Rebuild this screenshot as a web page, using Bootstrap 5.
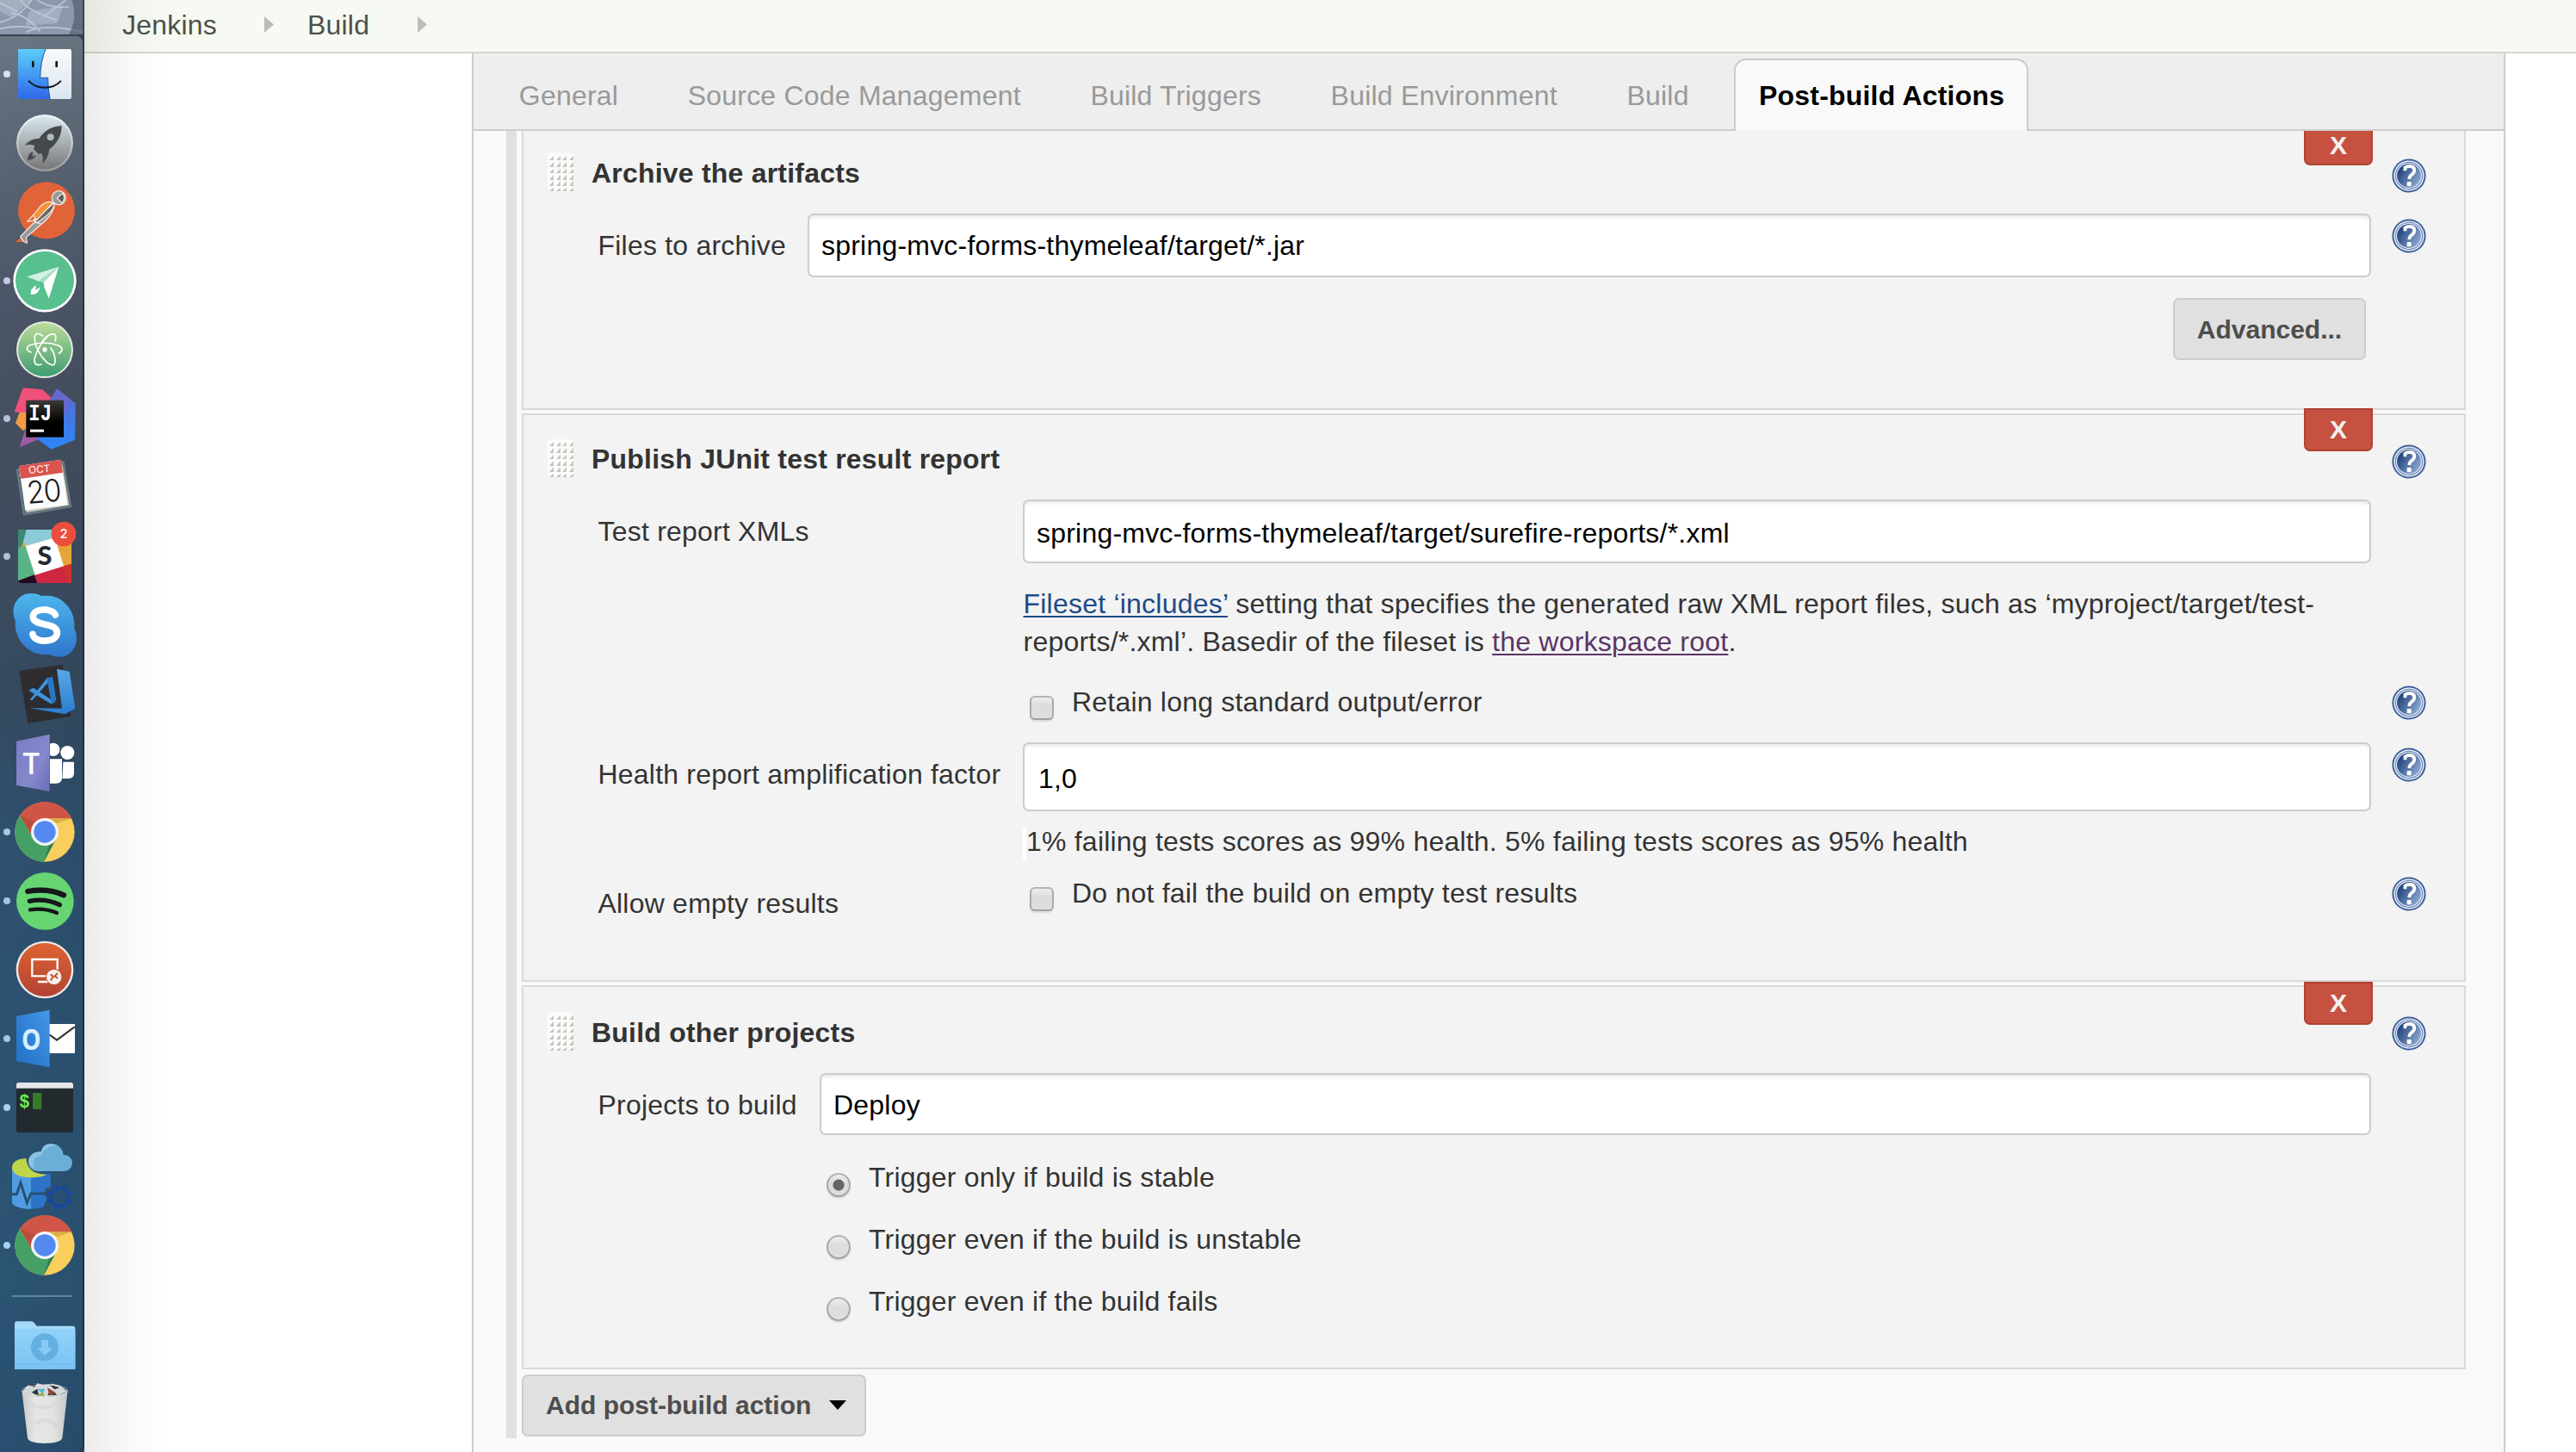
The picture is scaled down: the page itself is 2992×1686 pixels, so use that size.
<!DOCTYPE html>
<html lang="en">
<head>
<meta charset="utf-8">
<title>Build Config [Jenkins]</title>
<link href="https://cdn.jsdelivr.net/npm/bootstrap@5.3.0/dist/css/bootstrap.min.css" rel="stylesheet">
<style>
body{font-family:"Liberation Sans",Arial,sans-serif;font-size:32px;line-height:44px;letter-spacing:.21px;color:#333;width:2992px;height:1686px;overflow:hidden;background:#fff}
.dock{width:98px;height:1686px;background:#3b434f;z-index:5}
.dock-wall{height:40px;width:96px}
.dock-wall svg{display:block}
.dock-body{height:1646px;width:98px;border-top:2px solid #39424f;border-right:2px solid rgba(22,32,46,.65);border-radius:0 9px 9px 0;padding-top:4px;
 background:linear-gradient(100deg,rgba(255,255,255,.03),rgba(0,0,0,.1)),linear-gradient(#65727f 0,#5b6876 5%,#505c6c 12%,#485365 19%,#434d5e 25%,#3e4b5c 32%,#39495f 39%,#32495f 47%,#2e5070 56%,#2c5374 66%,#2c5678 80%,#2d587a 88%,#2b5377 100%)}
.dock-body svg{display:block;width:98px;flex:none}
.dock-sep{height:2px;width:70px;margin:18px 0 20px 14px;background:#5d87a8;flex:none}
.crumbs{height:62px;background:#f6faf2;border-bottom:2px solid #d3d7cf;color:#4e504b;padding-left:44px;line-height:58px}
.crumbs span{display:block}
.page-area{height:1624px}
.dock-shade{width:100px;height:1686px;top:0;left:98px;background:linear-gradient(90deg,rgba(0,0,0,.08),rgba(0,0,0,.045) 30%,rgba(0,0,0,.015) 65%,transparent);z-index:4;pointer-events:none}
.panel{width:2362px;margin-left:450px;border:solid #ccc;border-width:0 2px;background:#f9f9f9}
.tab-strip{height:90px;background:#eee;border-bottom:2px solid #ccc;padding:6px 0 0 24.5px;gap:24px;flex-wrap:nowrap}
.tab-strip .nav-link{height:84px;border:2px solid transparent;border-bottom:0;border-radius:14px 14px 0 0;padding:19px 26.3px 0;color:#999;white-space:nowrap;margin:0}
.tab-strip .nav-link.active{background:#f9f9f9;border-color:#ccc;color:#000;font-weight:700;padding:19px 25.6px 0 27px}
.scroll-area{height:1534px;padding:0 44px 0 38px}
.step-list{border-left:12px solid #e0e0e0;padding-left:6px;height:1518px}
.step{background:#f3f3f3;border:2px solid #d9d9d9;padding-right:44px;margin-bottom:4px;flex:none}
.step-a{height:324px;border-top:0;padding-top:26px}
.step-b{height:660px;padding-top:28px}
.step-c{height:446px;padding-top:30px;margin-bottom:6px}
.step-head{height:70px;padding-left:28px;font-weight:700}
.step-head strong{margin:1px 0 0 21px}
.help{width:40px;height:40px;display:block;flex:none;margin-left:24px}
.kill{right:106px;width:80px;height:50px;top:-8px;background:#c65140;border:2px solid #b04233;border-radius:0 0 7px 7px;color:#f3f0f0;font:700 30px/46px "Liberation Sans",sans-serif;text-align:center;padding:0;letter-spacing:0}
.step-a .kill{top:0;height:40px;border-top:0;line-height:34px;padding:0 0 6px}.step-c .kill{top:-6px}
.field{padding-left:86.5px}
.field label.cap{margin-top:15px;flex:none;white-space:nowrap}
.step-a .cap{width:243.5px}.step-b .cap{width:493.5px}.step-c .cap{width:257.5px}
.field .form-control{border:2px solid #ccc;border-radius:7px;height:74px;font-size:32px;line-height:36px;padding:0 14px;color:#000;letter-spacing:.21px;flex:1;background:#fff;box-shadow:inset 0 4px 4px -2px #e6e6e6;min-width:0}
.step-b .form-control{padding-top:4px}
.step-c .form-control{height:72px;padding-top:2px}
.step-b .form-control.num{height:80px;padding-left:16px}
.gap-right{margin-right:64px}
.btn-jk{background:#e0e0e0;border:2px solid #ccc;border-radius:7px;height:72px;color:#4d4d4d;font-weight:700;font-size:30px;line-height:36px;letter-spacing:0;padding:1px 0 0}
.desc{padding-left:580.5px;margin-top:25px;letter-spacing:.22px}
.desc a{color:#204a87;text-underline-offset:3px;text-decoration-thickness:2px}
.desc a.seen{color:#5c3566}
.step .form-check-input{width:28px;height:28px;border:2px solid #a9a9a9;border-color:#b4b4b4 #a9a9a9 #a0a0a0;background-color:#ddd;background-image:linear-gradient(#eee,#dcdcdc 40%,#dedede);margin:0;flex:none;box-shadow:0 2px 1px #dcdcdc;float:none}
.step .form-check-input[type=checkbox]{border-radius:6px}
.step .form-check-input[type=radio]:checked{background-image:radial-gradient(circle,#666 0 6px,transparent 7px),linear-gradient(#eee,#dcdcdc 40%,#dedede);background-size:100% 100%}
.check-text{margin-left:21px}
.health-note{margin-left:580px;height:40px;border-left:4px solid #fff;line-height:34px;margin-top:18px}
.radio-row{height:72px;padding-left:352px}
</style>
<script src="https://cdn.jsdelivr.net/npm/bootstrap@5.3.0/dist/js/bootstrap.bundle.min.js"></script>
</head>
<body class="d-flex position-relative">
<svg width="0" height="0" class="position-absolute"><defs>
<linearGradient id="hg" x1="0" y1=".2" x2="1" y2=".8"><stop offset=".1" stop-color="#23467f"/><stop offset=".9" stop-color="#86a3cb"/></linearGradient>
<symbol id="help" viewBox="0 0 40 40"><circle cx="20" cy="20" r="19.6" fill="#3e619c"/><circle cx="20" cy="20" r="17.6" fill="#eef2f9"/><circle cx="20" cy="20" r="16.2" fill="#6e8bbb"/><circle cx="20" cy="20" r="15" fill="#e6ecf6"/><circle cx="20" cy="20" r="13.9" fill="url(#hg)"/><path d="M15.5 14.2V10.500Q18 8.800 21.500 9Q26.500 9.600 26.300 14Q26 17 23 19Q20.500 20.800 20.300 24" fill="none" stroke="#fff" stroke-width="3.800"/><rect x="17.700" y="27" width="5" height="5.200" rx="1" fill="#fff"/></symbol>
<symbol id="grip" viewBox="0 0 30 44"><rect width="30" height="44" fill="#fbfbfa"/><path fill="#c6c4be" d="M7 3v5H2zm8 0v5h-5zm7 0v5h-5zm8 0v5h-5zM7 10v6H2zm8 0v6h-5zm7 0v6h-5zm8 0v6h-5zM7 18v5H2zm8 0v5h-5zm7 0v5h-5zm8 0v5h-5zM7 25v6H2zm8 0v6h-5zm7 0v6h-5zm8 0v6h-5zM7 32v6H2zm8 0v6h-5zm7 0v6h-5zm8 0v6h-5zM7 40v4H2zm8 0v4h-5zm7 0v4h-5zm8 0v4h-5z"/></symbol>
<linearGradient id="fb" x2="0" y2="1"><stop stop-color="#5bcdfa"/><stop offset="1" stop-color="#2f68ea"/></linearGradient>
<linearGradient id="fw" x2="0" y2="1"><stop stop-color="#f9f9fa"/><stop offset="1" stop-color="#dbe5f2"/></linearGradient>
<linearGradient id="lp" x2="0" y2="1"><stop stop-color="#d8e6ec"/><stop offset="1" stop-color="#777"/></linearGradient>
<linearGradient id="lr" x2="0" y2="1"><stop stop-color="#f4f9fb"/><stop offset="1" stop-color="#9a9a9a"/></linearGradient>
<linearGradient id="at" x2="0" y2="1"><stop stop-color="#b9dc99"/><stop offset="1" stop-color="#3f9c72"/></linearGradient>
<linearGradient id="ijb" x2="0" y2="1"><stop stop-color="#5a6bcf"/><stop offset="1" stop-color="#2a86f7"/></linearGradient>
<linearGradient id="ijk" x2="0" y2="1"><stop stop-color="#3a3a3a"/><stop offset=".6" stop-color="#000"/></linearGradient>
<linearGradient id="sk" x2="0" y2="1"><stop stop-color="#4db6ec"/><stop offset="1" stop-color="#2f75cc"/></linearGradient>
<linearGradient id="vs" x2="0" y2="1"><stop stop-color="#5aa7e6"/><stop offset="1" stop-color="#2a7dd0"/></linearGradient>
<linearGradient id="tm" x2="1" y2="1"><stop stop-color="#7a7cc6"/><stop offset=".6" stop-color="#8688cc"/><stop offset="1" stop-color="#6b6cbb"/></linearGradient>
<linearGradient id="rd" x2="0" y2="1"><stop stop-color="#dd6432"/><stop offset="1" stop-color="#b24234"/></linearGradient>
<linearGradient id="ol" x1="1" x2="0" y2="1"><stop stop-color="#4597e6"/><stop offset="1" stop-color="#1f6fc6"/></linearGradient>
<linearGradient id="fo" x2="0" y2="1"><stop stop-color="#92d2f8"/><stop offset="1" stop-color="#79c3f3"/></linearGradient>
<linearGradient id="tr" x2="1" y2="0"><stop stop-color="#c9c9c9"/><stop offset=".3" stop-color="#e6e6e5"/><stop offset=".7" stop-color="#e2e2e1"/><stop offset="1" stop-color="#c4c6c8"/></linearGradient>
<symbol id="chrome" viewBox="0 378 294 240"><circle cx="156" cy="498" r="104" fill="#f8cf5c"/><path d="M69 441A104 104 0 0 1 250 451L156 451 111 512Z" fill="#cf5646"/><path d="M69 441A104 104 0 0 0 153 602L197 520 156 498 115 520Z" fill="#46a066"/><path d="M69 441 112 512 125 462Z" fill="#a63f34" opacity=".45"/><path d="M153 602 196 522 170 545Z" fill="#226c40" opacity=".6"/><path d="M250 451H160L200 468Z" fill="#c99a35" opacity=".6"/><circle cx="156" cy="498" r="48" fill="#f4f4f6"/><circle cx="156" cy="498" r="38" fill="#548af0"/></symbol>
</defs></svg>

<aside class="dock d-flex flex-column flex-shrink-0">
<div class="dock-wall"><svg width="96" height="40" viewBox="0 0 288 120"><rect width="288" height="120" fill="#8b98ae"/><path fill="#a3aec0" d="M0 0H110L40 60 0 40zM100 40 220 20 200 80 90 90z"/><g fill="none" stroke="#c3cad6" stroke-width="6" opacity=".8"><path d="M0 78Q70 60 110 0M40 45Q90 50 140 110M0 10 60 40M90 112Q160 80 288 112M70 0Q100 40 200 70M130 0Q170 30 240 24M150 60 230 0M0 100Q60 84 130 100"/></g><path fill="#4a515e" opacity=".6" d="M250 0H288V120H240Q272 60 250 0z"/></svg></div>
<div class="dock-body d-flex flex-column">
<svg height="80" viewBox="0 138 294 240"><circle cx="24" cy="258" r="12" fill="#d6e2f4"/><rect x="63" y="171" width="186" height="174" rx="7" fill="url(#fw)"/><path d="M70 171H159Q141 214 140 271H167Q167 310 174 345H70Q63 345 63 338V178Q63 171 70 171Z" fill="url(#fb)"/><path d="M159 171Q141 214 140 271H167Q167 310 174 345" fill="none" stroke="#1b5394" stroke-width="3"/><path d="M115 216V231M197 216V231" stroke="#10151c" stroke-width="8" stroke-linecap="round"/><path d="M101 283Q122 305 156 305T211 283" fill="none" stroke="#10151c" stroke-width="6" stroke-linecap="round"/></svg>
<svg height="80" viewBox="0 378 294 240"><circle cx="156" cy="498" r="99" fill="url(#lr)"/><circle cx="156" cy="498" r="92" fill="url(#lp)"/><path d="M215 438Q215 488 172 520Q168 552 149 569Q151 550 146 535L134 536 117 519 121 508Q104 501 86 507Q106 482 136 483Q164 440 215 438Z" fill="#45494c"/><circle cx="176" cy="478" r="12" fill="#aeb9bd"/><path d="M114 527Q97 535 96 558Q120 557 125 541L113 545Z" fill="#45494c"/></svg>
<svg height="80" viewBox="0 618 294 240"><circle cx="162" cy="733" r="99" fill="#e16438"/><path d="M54 843 72 827 82 843Z" fill="#e16438"/><g stroke="#fbeee8" stroke-width="3.500" stroke-linejoin="round"><path d="M190 706Q190 745 145 780L92 826 94 847 82 841 71 824 120 774 189 706Z" fill="#999"/><path d="M190 706Q190 738 128 776L118 765Z" fill="#666"/><path d="M185 706Q165 697 142 717L115 750 128 766Z" fill="#f3953c"/><path d="M115 750 95 772 128 766M120 774 142 779" fill="none"/><circle cx="205" cy="689" r="24" fill="#999"/><path d="M219 673 199 690 216 707Q230 690 219 673Z" fill="#5b5b5b"/></g></svg>
<svg height="80" viewBox="0 858 294 240"><circle cx="24" cy="978" r="12" fill="#c4cde0"/><circle cx="156" cy="977.500" r="110" fill="#fff"/><circle cx="156" cy="977.500" r="102" fill="#58bf8e"/><path d="M205 929 94 964 135 980Z" fill="#d3f0e3"/><path d="M205 929 135 980 152 984Z" fill="#a5dfc5"/><path d="M205 929 152 984 154 1000 170 1040Z" fill="#fff"/><path d="M126 994Q105 1004 107 1026Q134 1029 140 1000L124 1011Z" fill="#fff"/></svg>
<svg height="80" viewBox="0 1098 294 240"><circle cx="156" cy="1218" r="99" fill="#e7ebe4"/><circle cx="156" cy="1218" r="93" fill="url(#at)"/><g fill="none" stroke="#fff" stroke-width="5" stroke-linecap="round"><path d="M108 1227Q82 1216 104 1202Q154 1185 205 1204Q228 1217 205 1231"/><path d="M148 1170Q124 1151 120 1178Q125 1225 163 1262Q194 1285 192 1252Q190 1230 177 1212"/><path d="M147 1190Q168 1161 189 1164Q198 1170 192 1188M165 1172Q133 1205 120 1250Q118 1277 144 1269"/></g><circle cx="156" cy="1218" r="8" fill="#fff"/></svg>
<svg height="80" viewBox="0 138 294 240"><circle cx="24" cy="258" r="12" fill="#b5c0d8"/><path d="M80 151 148 157 183 190 100 240 50 235Z" fill="#f0507a"/><path d="M68 236H100V290L80 300 54 274Z" fill="#f09a45"/><path d="M90 290 68 358 160 320Z" fill="#a15aa6"/><path d="M199 154 263 205 261 332 179 365 130 330 175 190Z" fill="url(#ijb)"/><path d="M199 154 172 192 222 250 250 197Z" fill="#6c66c4" opacity=".7"/><rect x="91" y="194" width="131" height="129" fill="url(#ijk)"/><text x="100" y="265" font-family="Liberation Mono" font-weight="700" font-size="84" textLength="80" lengthAdjust="spacingAndGlyphs" fill="#fff">IJ</text><rect x="105" y="296" width="48" height="9" fill="#fff"/></svg>
<svg height="80" viewBox="0 378 294 240"><path d="M58 436 222 408 248 566 82 594Z" fill="#5d7078" stroke="#8d9ca3" stroke-width="2"/><path d="M68 440 218 420 241 560 92 586Z" fill="#c9c5bd"/><path d="M66 423 212 401 236 558 88 578Z" fill="#fcfcfc"/><path d="M66 423 212 401 219 446 73 468Z" fill="#d9544e"/><g transform="rotate(-5 152 490)"><text x="142" y="446" text-anchor="middle" font-family="Inter" font-size="35" fill="#fff">OCT</text><text x="150" y="550" text-anchor="middle" font-family="Inter" font-weight="300" font-size="108" textLength="118" lengthAdjust="spacingAndGlyphs" letter-spacing="-3" fill="#1c1c1c">20</text></g></svg>
<svg height="80" viewBox="0 618 294 240"><circle cx="24" cy="738" r="12" fill="#b0c0d8"/><clipPath id="sc"><rect x="63" y="645" width="186" height="186" rx="10"/></clipPath><g clip-path="url(#sc)"><rect x="63" y="645" width="186" height="186" fill="#e3a53a"/><path d="M63 645H185L193 672 89 702Z" fill="#8ccbd7"/><path d="M63 645 92 645 76 704 63 709Z" fill="#3c8a70"/><path d="M63 709 89 701 122 801 63 823Z" fill="#58b487"/><path d="M63 823 120 802 131 831H63Z" fill="#1e0c24"/><path d="M120 802 249 764V831H131Z" fill="#cd2742"/><path d="M222 772 249 764V831H240Z" fill="#d03128"/><path d="M89 702 191 673 222 772 122 803Z" fill="#fff"/></g><text x="156" y="769" text-anchor="middle" font-family="Lato" font-weight="900" font-size="92" fill="#222a35">S</text><circle cx="222" cy="660" r="43" fill="#ea4e3d"/><text x="222" y="676" text-anchor="middle" font-family="Inter" font-size="44" font-weight="500" fill="#fff">2</text></svg>
<svg height="80" viewBox="0 858 294 240"><path d="M105 867Q130 866 144 876Q200 868 237 912Q262 944 259 989Q272 1012 263 1047Q245 1090 203 1088Q185 1088 172 1080Q110 1085 74 1037Q48 1000 54 962Q38 932 53 900Q72 868 105 867Z" fill="url(#sk)"/><path d="M193 942C185 919 113 914 115 950C118 985 199 964 199 1005C198 1042 117 1040 114 1009" fill="none" stroke="#fff" stroke-width="23" stroke-linecap="round"/></svg>
<svg height="80" viewBox="0 1098 294 240"><path d="M67 1137 218 1115 247 1295 97 1320Z" fill="#2d2d30"/><path d="M198 1130 242 1139 262 1268 226 1288 102 1266 216 1268Z" fill="url(#vs)"/><path d="M100 1205 116 1196 192 1246 178 1252ZM104 1238 164 1162 184 1159 112 1240Z" fill="#3e93df"/><path d="M164 1162 184 1159 196 1240 180 1252 166 1180Z" fill="#2a76c6"/></svg>
<svg height="80" viewBox="0 138 294 240"><path d="M57 182 173 158V357L57 335Z" fill="url(#tm)"/><text x="109" y="296" text-anchor="middle" font-family="Open Sans" font-weight="600" font-size="104" fill="#fff">T</text><g fill="#fff"><path d="M174 191A23 23 0 1 1 174 231ZM174 244H216V312Q214 329 196 329H174ZM220 254H258V295Q256 312 240 312H217Z"/><circle cx="235" cy="222" r="24"/></g></svg>
<svg height="80"><use href="#chrome" width="98" height="80"/><circle cx="8" cy="40" r="4" fill="#a5c6e8"/></svg>
<svg height="80" viewBox="0 618 294 240"><circle cx="24" cy="738" r="12" fill="#a5c6e8"/><circle cx="157" cy="739" r="100" fill="#66d572"/><g fill="none" stroke="#15171a" stroke-linecap="round"><path d="M97 705Q165 693 222 718" stroke-width="19"/><path d="M103 739Q158 728 208 752" stroke-width="16"/><path d="M105 769Q155 761 198 780" stroke-width="13"/></g></svg>
<svg height="80" viewBox="0 858 294 240"><circle cx="156" cy="978" r="100" fill="#ececec"/><circle cx="156" cy="978" r="93" fill="url(#rd)"/><path d="M112 942H200V1000H112ZM145 1000H165V1020H132" fill="none" stroke="#fff" stroke-width="7"/><circle cx="188" cy="1003" r="29" fill="#c3502f"/><circle cx="188" cy="1003" r="26" fill="#f5f1ef"/><path d="M176 995 186 1002 176 1015M201 990 191 1000 201 1008" fill="none" stroke="#c3502f" stroke-width="6"/></svg>
<svg height="80" viewBox="0 1098 294 240"><circle cx="24" cy="1218" r="12" fill="#a5c6e8"/><rect x="160" y="1167" width="101" height="102" fill="#fff"/><path d="M172 1204 198 1223 260 1177" fill="none" stroke="#333" stroke-width="6"/><path d="M57 1140 173 1118V1318L57 1296Z" fill="url(#ol)"/><text x="109" y="1256" text-anchor="middle" font-family="Open Sans" font-weight="700" font-size="104" textLength="68" lengthAdjust="spacingAndGlyphs" fill="#d5f0ff">O</text></svg>
<svg height="80" viewBox="0 18 294 240"><circle cx="24" cy="138" r="12" fill="#a9d3f2"/><rect x="57" y="51" width="198" height="174" rx="8" fill="#222a2e"/><path d="M57 71V59Q57 51 65 51H247Q255 51 255 59V71Z" fill="#e6e6e8"/><text x="67" y="137" font-family="Liberation Mono" font-size="64" font-weight="700" textLength="37" lengthAdjust="spacingAndGlyphs" fill="#6cec50">$</text><rect x="114" y="87" width="31" height="57" fill="#367a2c"/></svg>
<svg height="80" viewBox="0 258 294 240"><path d="M42 348V470Q50 488 108 492V370Z" fill="#4f9ce4"/><path d="M108 370 176 368V415L160 420 155 440 163 455 150 485 108 492Z" fill="#2d74c8"/><path d="M91 315Q42 318 42 348Q45 380 104 382Q155 380 160 371Q95 370 91 315Z" fill="#bfd54a"/><path d="M42 440H58L72 400 94 470 108 438H160" fill="none" stroke="#29506f" stroke-width="9"/><path d="M130 360Q98 355 99 325Q105 292 143 292Q152 265 182 264Q215 268 221 302Q250 303 252 332Q250 357 222 360Z" fill="#6bafd6"/><path d="M118 350Q108 310 144 305Q155 272 200 270Q152 252 143 292Q105 292 99 325Q100 340 118 350Z" fill="#8cc3e2"/><circle cx="208" cy="450" r="31" fill="none" stroke="#1746a8" stroke-width="8"/><path d="M220 418 224 407M196 418 192 407M220 482 224 492M196 482 192 492M240 438 251 434M240 462 251 467M176 438 165 434M176 462 165 467" stroke="#1746a8" stroke-width="9"/></svg>
<svg height="80"><use href="#chrome" width="98" height="80"/><circle cx="8" cy="40" r="4" fill="#a9d3f2"/></svg>
<div class="dock-sep"></div>
<svg height="72" viewBox="0 858 294 216"><path d="M51 892Q51 883 60 883H110Q118 884 122 892L128 899H254Q262 899 262 908V1049H51Z" fill="#a5dafa"/><path d="M51 912Q51 908 58 908H255Q262 908 262 914V1043Q262 1050 255 1050H58Q51 1050 51 1043Z" fill="url(#fo)"/><path d="M51 1032H262" stroke="#69b4e6" stroke-width="2"/><circle cx="156" cy="973" r="48" fill="#63afe0"/><path d="M144 948H168V975H183L156 1003 130 975H144Z" fill="#86caf5"/></svg>
<svg height="88" viewBox="0 1074 294 264"><path d="M76 1122Q90 1144 156 1146Q222 1144 236 1122L217 1290Q210 1307 156 1308Q102 1307 96 1290Z" fill="url(#tr)"/><path d="M78 1128 90 1112 100 1104 128 1098 150 1104 182 1100 208 1106 234 1126 200 1142 156 1147 110 1142Z" fill="#d5d8da"/><path d="M96 1104 130 1098 120 1112ZM110 1130 130 1118 136 1144ZM170 1102 208 1114 190 1120ZM166 1140 176 1122 200 1140Z" fill="#2e3338"/><path d="M130 1120 156 1118 150 1134Z" fill="#45b8d8"/><path d="M165 1114 195 1132 172 1142Z" fill="#8a4a3a"/><path d="M126 1138 150 1130 156 1146Z" fill="#93ad4b"/><path d="M110 1170Q150 1200 205 1165M120 1240Q160 1210 200 1250" stroke="#cfcfce" stroke-width="14" fill="none" opacity=".4"/><ellipse cx="156" cy="1124" rx="79" ry="20" fill="none" stroke="#e3e6e9" stroke-width="3" opacity=".7"/></svg>
</div>
</aside>
<div class="dock-shade position-absolute"></div>

<div class="flex-grow-1 d-flex flex-column">
<nav class="crumbs d-flex align-items-start">
<span>Jenkins</span><svg width="12" height="20" style="margin:19px 39px 0 54px"><path d="M1 0 12 9.500 1 19Z" fill="#bcbcbc"/></svg><span>Build</span><svg width="12" height="20" style="margin:19px 0 0 55px"><path d="M1 0 12 9.500 1 19Z" fill="#bcbcbc"/></svg>
</nav>
<main class="page-area d-flex">
<div class="panel">
<ul class="nav tab-strip">
<li class="nav-item"><a class="nav-link">General</a></li>
<li class="nav-item"><a class="nav-link">Source Code Management</a></li>
<li class="nav-item"><a class="nav-link">Build Triggers</a></li>
<li class="nav-item"><a class="nav-link">Build Environment</a></li>
<li class="nav-item"><a class="nav-link">Build</a></li>
<li class="nav-item"><a class="nav-link active">Post-build Actions</a></li>
</ul>
<div class="scroll-area overflow-hidden">
<div class="step-list d-flex flex-column">

<section class="step step-a position-relative">
<button class="kill position-absolute">X</button>
<div class="step-head d-flex"><svg width="30" height="44"><use href="#grip"/></svg><strong>Archive the artifacts</strong><svg class="help ms-auto" style="margin-top:6px"><use href="#help"/></svg></div>
<div class="field d-flex"><label class="cap">Files to archive</label><input class="form-control" value="spring-mvc-forms-thymeleaf/target/*.jar"><svg class="help" style="margin-top:6px"><use href="#help"/></svg></div>
<div class="d-flex justify-content-end" style="padding:24px 70px 0 0"><button class="btn btn-jk" style="width:224px">Advanced...</button></div>
</section>

<section class="step step-b position-relative">
<button class="kill position-absolute">X</button>
<div class="step-head d-flex"><svg width="30" height="44"><use href="#grip"/></svg><strong>Publish JUnit test result report</strong><svg class="help ms-auto" style="margin-top:6px"><use href="#help"/></svg></div>
<div class="field d-flex gap-right"><label class="cap">Test report XMLs</label><input class="form-control" value="spring-mvc-forms-thymeleaf/target/surefire-reports/*.xml"></div>
<div class="desc"><a href="#">Fileset ‘includes’</a> setting that specifies the generated raw XML report files, such as ‘myproject/target/test-<br>reports/*.xml’. Basedir of the fileset is <a href="#" class="seen">the workspace root</a>.</div>
<div class="d-flex" style="height:69px;padding:26px 0 0 588px"><input type="checkbox" class="form-check-input" style="margin-top:15px"><span class="check-text">Retain long standard output/error</span><svg class="help ms-auto" style="margin-top:3px"><use href="#help"/></svg></div>
<div class="field d-flex" style="margin-top:26px"><label class="cap">Health report amplification factor</label><input class="form-control num" value="1,0"><svg class="help" style="margin-top:6px"><use href="#help"/></svg></div>
<div class="health-note">1% failing tests scores as 99% health. 5% failing tests scores as 95% health</div>
<div class="field d-flex" style="margin-top:15px"><label class="cap" style="margin-top:12px">Allow empty results</label><input type="checkbox" class="form-check-input" style="margin:15px 0 0 8px"><span class="check-text">Do not fail the build on empty test results</span><svg class="help ms-auto" style="margin-top:3px"><use href="#help"/></svg></div>
</section>

<section class="step step-c position-relative">
<button class="kill position-absolute">X</button>
<div class="step-head d-flex"><svg width="30" height="44"><use href="#grip"/></svg><strong>Build other projects</strong><svg class="help ms-auto" style="margin-top:4px"><use href="#help"/></svg></div>
<div class="field d-flex gap-right"><label class="cap">Projects to build</label><input class="form-control" value="Deploy"></div>
<div style="padding-top:27px">
<div class="radio-row d-flex"><input type="radio" name="t" class="form-check-input" style="margin-top:17px" checked><span class="check-text">Trigger only if build is stable</span></div>
<div class="radio-row d-flex"><input type="radio" name="t" class="form-check-input" style="margin-top:17px"><span class="check-text">Trigger even if the build is unstable</span></div>
<div class="radio-row d-flex"><input type="radio" name="t" class="form-check-input" style="margin-top:17px"><span class="check-text">Trigger even if the build fails</span></div>
</div>
</section>

<button class="btn btn-jk d-flex align-items-center align-self-start" style="width:400px;padding:0 0 0 26px">Add post-build action<svg width="20" height="12" style="margin-left:21px"><path d="M0 0H20L10 11Z"/></svg></button>
</div>
</div>
</div>
</main>
</div>
</body>
</html>
